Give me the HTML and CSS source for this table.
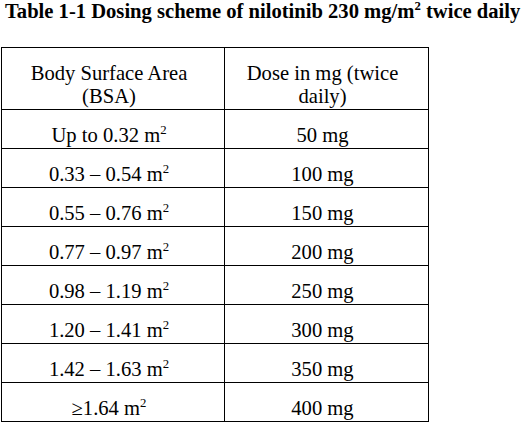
FILE: index.html
```html
<!DOCTYPE html>
<html lang="en">
<head>
<meta charset="utf-8">
<title>Dosing scheme of nilotinib</title>
<link rel="stylesheet" href="styles.css">
</head>
<body>
<h1 class="caption">Table 1-1 Dosing scheme of nilotinib 230 mg/m<sup>2</sup> twice daily</h1>
<table class="dosing">
  <colgroup><col class="col-bsa"><col class="col-dose"></colgroup>
  <thead>
    <tr><th>Body Surface Area<br>(BSA)</th><th>Dose in mg (twice<br>daily)</th></tr>
  </thead>
  <tbody>
    <tr><td>Up to 0.32 m<sup>2</sup></td><td>50 mg</td></tr>
    <tr><td>0.33 – 0.54 m<sup>2</sup></td><td>100 mg</td></tr>
    <tr><td>0.55 – 0.76 m<sup>2</sup></td><td>150 mg</td></tr>
    <tr><td>0.77 – 0.97 m<sup>2</sup></td><td>200 mg</td></tr>
    <tr><td>0.98 – 1.19 m<sup>2</sup></td><td>250 mg</td></tr>
    <tr><td>1.20 – 1.41 m<sup>2</sup></td><td>300 mg</td></tr>
    <tr><td>1.42 – 1.63 m<sup>2</sup></td><td>350 mg</td></tr>
    <tr><td>≥1.64 m<sup>2</sup></td><td>400 mg</td></tr>
  </tbody>
</table>
</body>
</html>
```

FILE: styles.css
```css
html, body {
  margin: 0;
  padding: 0;
  background: #ffffff;
}
body {
  font-family: "Liberation Serif", "Times New Roman", serif;
  color: #000000;
  font-size: 20.6px;
}
.caption {
  margin: 0;
  padding-left: 5px;
  font-size: 20.6px;
  font-weight: bold;
  line-height: 22px;
  white-space: nowrap;
}
sup {
  font-size: 0.62em;
  line-height: 0;
  vertical-align: 0.62em;
}
.dosing {
  margin: 25px 0 0 1px;
  border-collapse: collapse;
  table-layout: fixed;
  width: 427px;
}
.col-bsa { width: 223px; }
.col-dose { width: 204px; }
.dosing th,
.dosing td {
  border: 1px solid #000000;
  padding: 14px 8px 1px 0;
  line-height: 23px;
  font-weight: normal;
  text-align: center;
  vertical-align: top;
  white-space: nowrap;
}
```
